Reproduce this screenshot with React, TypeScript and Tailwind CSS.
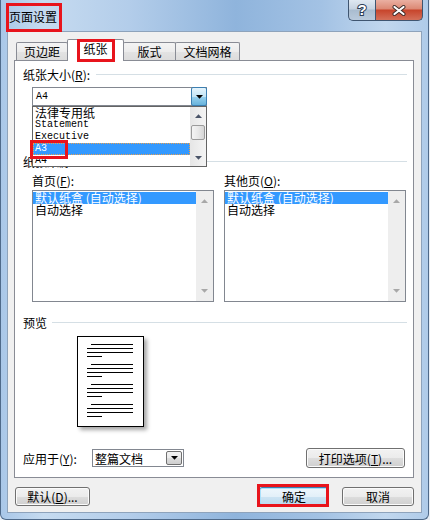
import React from "react";

function TriUp({ color }: { color: string }) {
  return (
    <svg width="7" height="4" viewBox="0 0 7 4" className="block">
      <path d="M0 4L3.5 0.3L7 4Z" fill={color} />
    </svg>
  );
}
function TriDown({ color }: { color: string }) {
  return (
    <svg width="7" height="4" viewBox="0 0 7 4" className="block">
      <path d="M0 0L7 0L3.5 3.7Z" fill={color} />
    </svg>
  );
}

function DisabledList({ label, keyChar }: { label: string; keyChar: string }) {
  return (
    <div className="flex w-[182px] flex-col">
      <div className="h-[13px] whitespace-nowrap">
        {label}(<span className="underline">{keyChar}</span>):
      </div>
      <div className="mt-[3px] flex h-[112px] border border-[#828790] bg-white">
        <div className="flex flex-1 flex-col pt-px">
          <div className="h-[12px] whitespace-nowrap bg-[#3399ff] pl-[2px] leading-[12px] text-white">
            默认纸盒 (自动选择)
          </div>
          <div className="h-[12px] whitespace-nowrap pl-[2px] leading-[12px]">自动选择</div>
        </div>
        <div className="flex w-[17px] flex-col items-center justify-between bg-[#eeeeee] py-[8px]">
          <TriUp color="#a8a8a8" />
          <TriDown color="#a8a8a8" />
        </div>
      </div>
    </div>
  );
}

function PageLines() {
  return (
    <div className="flex flex-col gap-[3px]">
      <div className="ml-[4px] h-px w-[42px] bg-black" />
      <div className="h-px w-[46px] bg-black" />
      <div className="h-px w-[46px] bg-black" />
      <div className="h-px w-[15px] bg-black" />
    </div>
  );
}

const btn =
  "flex items-center justify-center rounded-[3px] border border-[#707070] bg-[linear-gradient(180deg,#f2f2f2_0%,#ebebeb_50%,#dddddd_51%,#cfcfcf_100%)] shadow-[inset_0_0_0_1px_#fbfbfb] whitespace-nowrap";

export default function App() {
  return (
    <div className="relative h-[520px] w-[430px] bg-[#e8eef5] font-['Noto_Sans_CJK_SC',sans-serif] text-[12px] leading-[13px] text-black">
      <div className="flex h-[520px] w-[429px] flex-col rounded-b-[6px] border-x border-b border-[#4f6a8a] bg-[linear-gradient(90deg,#a9c7e8_0%,#c6dbf0_10%,#b3cdea_30%,#8fb4dc_55%,#a3c2e4_75%,#c1d7ee_90%,#afcbe9_100%)]">
        {/* title bar */}
        <div className="flex h-[31px] shrink-0">
          <div className="pl-[8px] pt-[10px] whitespace-nowrap">页面设置</div>
          <div className="flex-1" />
          <div className="mr-[5px] flex h-[21px]">
            <div className="flex h-[21px] w-[27px] items-center justify-center rounded-bl-[5px] border-b border-l border-[#3f5570] bg-[linear-gradient(180deg,#dfe8f1_0%,#c6d3e1_45%,#a9bccf_50%,#b9cadc_100%)]">
              <svg width="14" height="16" viewBox="0 0 14 16">
                <text
                  x="7"
                  y="13"
                  textAnchor="middle"
                  fontSize="15"
                  fontWeight="bold"
                  fontFamily="Liberation Sans, sans-serif"
                  fill="#ffffff"
                  stroke="#2c3d55"
                  strokeWidth="2"
                  paintOrder="stroke"
                >
                  ?
                </text>
              </svg>
            </div>
            <div className="flex h-[21px] w-[48px] items-center justify-center rounded-br-[5px] border-x border-b border-[#3f5570] bg-[linear-gradient(180deg,#eab0a2_0%,#dc8874_45%,#c7442b_50%,#d4705a_100%)]">
              <svg width="14" height="11" viewBox="0 0 14 11">
                <path d="M2.5 2L11.5 9M11.5 2L2.5 9" stroke="#3a2a28" strokeWidth="4" strokeLinecap="round" />
                <path d="M2.5 2L11.5 9M11.5 2L2.5 9" stroke="#ffffff" strokeWidth="2.2" strokeLinecap="round" />
              </svg>
            </div>
          </div>
        </div>

        {/* client area */}
        <div className="ml-[6px] flex h-[482px] w-[415px] flex-col border border-[#8ea3bb] bg-[#f0f0f0]">
          <div className="ml-[6px] mt-[7px] flex w-[400px] flex-col">
            {/* tabs */}
            <div className="flex h-[21px] items-end pl-[2px]">
              <div className="flex h-[18px] w-[52px] items-center justify-center rounded-t-[2px] border border-b-0 border-[#898c95] bg-[linear-gradient(180deg,#f4f4f4_0%,#ececec_50%,#e3e3e3_51%,#dcdcdc_100%)]">
                页边距
              </div>
              <div className="relative z-10 -mb-px -ml-px flex h-[22px] w-[57px] justify-center rounded-t-[2px] border border-b-0 border-[#898c95] bg-white pt-[2px]">
                纸张
              </div>
              <div className="-ml-px flex h-[18px] w-[53px] items-center justify-center rounded-t-[2px] border border-b-0 border-[#898c95] bg-[linear-gradient(180deg,#f4f4f4_0%,#ececec_50%,#e3e3e3_51%,#dcdcdc_100%)]">
                版式
              </div>
              <div className="-ml-px flex h-[18px] w-[65px] items-center justify-center rounded-t-[2px] border border-b-0 border-[#898c95] bg-[linear-gradient(180deg,#f4f4f4_0%,#ececec_50%,#e3e3e3_51%,#dcdcdc_100%)]">
                文档网格
              </div>
            </div>

            {/* panel */}
            <div className="flex h-[418px] w-[400px] flex-col border border-[#898c95] bg-white">
              {/* paper size label */}
              <div className="mt-[7px] flex h-[13px] items-center pl-[8px] pr-[6px]">
                <span className="whitespace-nowrap">
                  纸张大小(<span className="underline">R</span>):
                </span>
                <div className="ml-[6px] h-px flex-1 bg-[#d5dfe5]" />
              </div>

              {/* combo with open list */}
              <div className="relative ml-[17px] mt-[6px] w-[175px]">
                <div className="flex h-[19px] w-[175px] border border-[#828790] bg-white">
                  <div className="flex flex-1 items-center pl-[3px] font-['Liberation_Mono',monospace] text-[10px]">
                    A4
                  </div>
                  <div className="-mr-px -my-px flex h-[19px] w-[16px] items-center justify-center rounded-[2px] border border-[#3c7fb1] bg-[linear-gradient(180deg,#e5f4fc_0%,#c4e5f6_50%,#98d1ef_51%,#68b3db_100%)]">
                    <TriDown color="#000000" />
                  </div>
                </div>
                <div className="absolute left-0 top-[19px] z-20 flex h-[61px] w-[175px] border border-[#646464] bg-white">
                  <div className="flex flex-1 flex-col overflow-hidden">
                    <div className="h-[12px] whitespace-nowrap pl-[2px] leading-[12px]">法律专用纸</div>
                    <div className="h-[12px] whitespace-nowrap pl-[2px] font-['Liberation_Mono',monospace] text-[10px] leading-[12px]">
                      Statement
                    </div>
                    <div className="h-[12px] whitespace-nowrap pl-[2px] font-['Liberation_Mono',monospace] text-[10px] leading-[12px]">
                      Executive
                    </div>
                    <div className="h-[12px] whitespace-nowrap border border-dotted border-[#e8a050] bg-[#3399ff] pl-[1px] font-['Liberation_Mono',monospace] text-[10px] leading-[10px] text-white">
                      A3
                    </div>
                    <div className="h-[12px] whitespace-nowrap pl-[2px] font-['Liberation_Mono',monospace] text-[10px] leading-[12px]">
                      A4
                    </div>
                  </div>
                  <div className="flex w-[16px] flex-col items-center bg-[linear-gradient(90deg,#e6e6e6_0%,#f4f4f4_100%)]">
                    <div className="flex h-[17px] items-center justify-center">
                      <TriUp color="#4a5468" />
                    </div>
                    <div className="mt-px h-[15px] w-[14px] rounded-[2px] border border-[#9b9b9b] bg-[linear-gradient(90deg,#f4f4f4_0%,#e8e8e8_50%,#d6d6d6_100%)]" />
                    <div className="flex-1" />
                    <div className="flex h-[17px] items-center justify-center">
                      <TriDown color="#4a5468" />
                    </div>
                  </div>
                </div>
              </div>

              {/* paper source label (behind list) */}
              <div className="mt-[49px] flex h-[13px] items-center pl-[8px] pr-[6px]">
                <span className="whitespace-nowrap">纸张来源</span>
                <div className="ml-[6px] h-px flex-1 bg-[#d5dfe5]" />
              </div>

              {/* two lists */}
              <div className="ml-[17px] mt-[6px] flex gap-[10px]">
                <DisabledList label="首页" keyChar="F" />
                <DisabledList label="其他页" keyChar="O" />
              </div>

              {/* preview */}
              <div className="mt-[14px] flex h-[13px] items-center pl-[8px] pr-[6px]">
                <span className="whitespace-nowrap">预览</span>
                <div className="ml-[5px] h-px flex-1 bg-[#d5dfe5]" />
              </div>
              <div className="ml-[62px] mt-[7px] flex h-[91px] w-[67px] flex-col gap-[7px] border border-black bg-white pl-[9px] pt-[7px] shadow-[3px_3px_4px_rgba(0,0,0,0.35)]">
                <PageLines />
                <PageLines />
                <PageLines />
                <PageLines />
              </div>

              {/* apply to */}
              <div className="mt-[21px] flex h-[20px] items-center pl-[8px] pr-[8px]">
                <span className="w-[69px] whitespace-nowrap">
                  应用于(<span className="underline">Y</span>):
                </span>
                <div className="flex h-[18px] w-[92px] border border-[#828790] bg-white">
                  <div className="flex flex-1 items-center whitespace-nowrap pl-[2px]">整篇文档</div>
                  <div className="m-px flex h-[14px] w-[16px] items-center justify-center rounded-[2px] border border-[#707070] bg-[linear-gradient(180deg,#f2f2f2_0%,#ebebeb_50%,#dddddd_51%,#cfcfcf_100%)]">
                    <TriDown color="#000000" />
                  </div>
                </div>
                <div className="flex-1" />
                <div className={btn + " h-[20px] w-[99px]"}>
                  打印选项(<span className="underline">T</span>)...
                </div>
              </div>
            </div>
          </div>

          {/* bottom buttons */}
          <div className="mt-[9px] flex items-center pl-[7px] pr-[7px]">
            <div className={btn + " h-[19px] w-[75px]"}>
              默认(<span className="underline">D</span>)...
            </div>
            <div className="flex-1" />
            <div className="flex h-[19px] w-[70px] items-center justify-center rounded-[3px] border border-[#3c7fb1] bg-[linear-gradient(180deg,#eef7fc_0%,#e3f0f9_50%,#cde4f3_51%,#bcdaef_100%)] shadow-[inset_0_0_0_1px_#a8e0fb]">
              确定
            </div>
            <div className={btn + " ml-[13px] h-[19px] w-[72px]"}>取消</div>
          </div>
        </div>
      </div>

      {/* red annotation boxes */}
      <div className="pointer-events-none absolute left-[6px] top-[3px] h-[29px] w-[56px] border-[3px] border-[#e8141c]" />
      <div className="pointer-events-none absolute left-[77px] top-[39px] z-30 h-[23px] w-[38px] border-[3px] border-[#e8141c]" />
      <div className="pointer-events-none absolute left-[30px] top-[140px] z-30 h-[19px] w-[38px] border-[3px] border-[#e8141c]" />
      <div className="pointer-events-none absolute left-[257px] top-[484px] z-30 h-[23px] w-[72px] border-[3px] border-[#e8141c]" />
    </div>
  );
}
